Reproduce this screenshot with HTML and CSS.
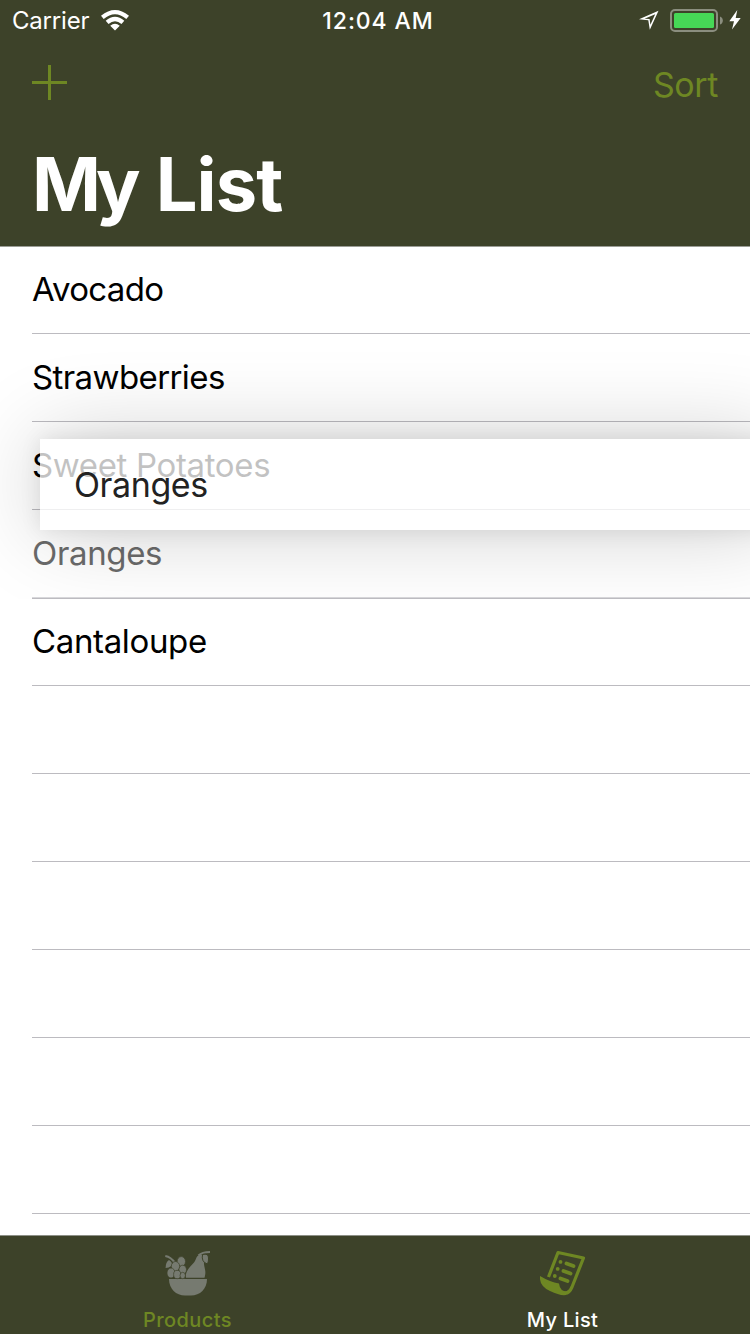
FILE: index.html
```html
<!DOCTYPE html>
<html lang="en">
<head>
<meta charset="utf-8">
<title>My List</title>
<link rel="stylesheet" href="styles.css">
</head>
<body>
<div class="screen">
  <header class="header">
    <div class="status">
      <div class="status-left">
        <span class="carrier">Carrier</span>
        <svg class="wifi" width="28" height="21" viewBox="0 0 28 21"><path fill="#fff" d="M0 5.800Q14-5.800 28 5.800L25.300 9.100Q14-.6 2.700 9.100ZM4.700 10.700Q14 3 23.300 10.700L20.500 13.900Q14 8.600 7.500 13.900ZM9.200 15.800Q14 11.800 18.800 15.800L14 20.500Z"/></svg>
      </div>
      <span class="clock">12:04 AM</span>
      <div class="status-right">
        <svg class="locate" width="20" height="20" viewBox="0 0 20 20"><path fill="#fff" fill-rule="evenodd" d="M19.500 .8L0 9.200L9.300 10.300L10.800 19.800ZM16.200 4.200L11.400 14.800L10.600 9L5.500 8.700Z"/></svg>
        <svg class="battery" width="53" height="23" viewBox="0 0 53 23"><rect x="1" y="1" width="46" height="21" rx="4" fill="none" stroke="#8b8e7f" stroke-width="2"/><rect x="4" y="4" width="40" height="15" rx="1.500" fill="#46d856"/><path d="M50 7.500Q52.800 8.500 52.800 11.500T50 15.500Z" fill="#8b8e7f"/></svg>
        <svg class="bolt" width="12" height="20" viewBox="0 0 12 20"><path fill="#fff" d="M8.300 0L.3 11.300H5L3 19.500L11.700 8H6.700Z"/></svg>
      </div>
    </div>
    <nav class="actions">
      <svg class="plus" width="35" height="35" viewBox="0 0 35 35"><path stroke="#6e8723" stroke-width="3" d="M0 17.500H35M17.500 0V35"/></svg>
      <span class="sort">Sort</span>
    </nav>
    <h1 class="title"><span class="title-m">M</span><span class="title-y">y</span> List</h1>
  </header>
  <main class="list">
    <div class="row"><span class="avocado">Avocado</span></div>
    <div class="row"><span class="strawberries">Strawberries</span></div>
    <div class="row"><span class="potatoes">Sweet Potatoes</span></div>
    <div class="row row-source"><span class="oranges">Oranges</span></div>
    <div class="row"><span class="cantaloupe">Cantaloupe</span></div>
    <div class="row"></div>
    <div class="row"></div>
    <div class="row"></div>
    <div class="row"></div>
    <div class="row"></div>
    <div class="row"></div>
    <div class="drag-layer"><div class="dragged"><span>Oranges</span></div></div>
  </main>
  <footer class="tabs">
    <div class="tab">
      <svg width="46" height="46" viewBox="0 0 46 46" fill="#767a70"><path d="M4 29H42C42 39 35 45.500 26 45.500H20C11 45.500 4 39 4 29Z"/><path d="M21 27.700C20 20 26 16.500 29 12.500C31.500 9 31 5.500 35.500 4.500C40 4.500 38.500 10 39 14C39.500 19 41.500 21 39.500 27.700Z"/><path d="M33.500 5.500Q37 2 45 2" fill="none" stroke="#767a70" stroke-width="2.200"/><path d="M37.500 4.500Q43.500 3 43.500 8Q43.800 11 42.500 14Q36 12 37.500 4.500Z" stroke="#3d4229" stroke-width="1"/><path d="M.3 6Q6 7 10 13" fill="none" stroke="#767a70" stroke-width="2.200"/><path d="M4 10Q8.500 13 6.300 16Q4 18 .6 18Q.6 12 4 10Z"/><g stroke="#3d4229" stroke-width=".7"><ellipse cx="16.300" cy="11.500" rx="4.200" ry="4.900"/><ellipse cx="10.500" cy="16.500" rx="4.200" ry="5"/><ellipse cx="17.700" cy="19.700" rx="3.800" ry="4.500"/><ellipse cx="6" cy="23" rx="4" ry="5"/><ellipse cx="12.200" cy="24.500" rx="3.600" ry="4.200"/><ellipse cx="17.700" cy="25.500" rx="2.700" ry="3.200"/></g></svg>
      <span class="tab-label">Products</span>
    </div>
    <div class="tab tab-active">
      <svg width="46" height="46" viewBox="0 0 46 46"><path fill="none" stroke="#6e8723" stroke-width="3.200" stroke-linejoin="round" d="M8.500 27L18 2.500L43.500 8L32 37Q29 44 24 43"/><path fill="#6e8723" d="M0 26Q10 32 19 33.500Q20 42 28 41.500L26 45Q20 46 10 41Q-1 36 0 26Z"/><g stroke="#6e8723" stroke-width="3.800" stroke-linecap="round"><path d="M26.500 13.500L33.500 16M23.500 21L30.500 23.500M20.500 28.500L27.500 31M20.500 11.800V11.900M17.700 18.800V18.900M14.800 26V26.100"/></g></svg>
      <span class="tab-label">My List</span>
    </div>
  </footer>
</div>
</body>
</html>
```
FILE: styles.css
```css
* { box-sizing: border-box; }
body { margin: 0; font-family: Inter, "Liberation Sans", sans-serif; background: #fff; }
svg { display: block; flex: none; }
.screen { width: 750px; height: 1334px; display: flex; flex-direction: column; overflow: hidden; }
.header { height: 246px; flex: none; background: #3d4229; color: #fff; }
.status { height: 40px; display: grid; grid-template-columns: 1fr auto 1fr; padding: 0 9px 0 12px; align-items: center; }
.status-left, .status-right { display: flex; align-items: center; }
.status-left { gap: 12px; }
.status-right { justify-content: flex-end; }
.carrier { font-size: 24px; letter-spacing: -.2px; padding-top: 1px; }
.clock { font-size: 23px; font-weight: 500; letter-spacing: .9px; padding: 2px 0 0 3px; }
.locate { margin-right: 11px; }
.battery { margin-right: 6px; }
.actions { height: 84px; display: flex; justify-content: space-between; align-items: center; padding: 0 32px; }
.sort { color: #6e8723; font-size: 34px; letter-spacing: -.4px; padding-top: 4px; }
.title { margin: 0; padding: 4px 0 0 32px; font-size: 74px; line-height: 112px; font-weight: 700; letter-spacing: -.9px; }
.title-m { letter-spacing: -5px; }
.title-y { letter-spacing: -1.5px; }
.list { flex: 1; position: relative; overflow: hidden; }
.list::before { content: ""; position: absolute; top: 0; left: 0; right: 0; height: 1px; background: #9b9d96; }
.row { height: 88px; margin-left: 32px; padding-bottom: 2px; border-bottom: 1px solid #bcbbc0; display: flex; align-items: center; font-size: 33px; color: #000; }
.row-source { color: #6b6b6b; border-bottom-color: #d9d9dc; }
.avocado { letter-spacing: -.65px; }
.strawberries { letter-spacing: -.6px; }
.potatoes { letter-spacing: -.36px; }
.oranges { letter-spacing: -.35px; }
.cantaloupe { letter-spacing: -.35px; }
.drag-layer { position: absolute; left: 0; top: 88px; width: 750px; height: 265px; overflow: hidden; }
.drag-layer::after { content: ""; position: absolute; left: 32px; right: 0; bottom: 0; height: 1px; background: #bcbbc0; }
.dragged { position: absolute; left: 40px; top: 105px; width: 738px; height: 91px; padding: 0 0 1px 34px; display: flex; align-items: center; background: rgba(255,255,255,.76); color: #222; font-size: 34px; letter-spacing: -.4px; box-shadow: 0 0 90px rgba(0,0,0,.2), 0 0 20px rgba(0,0,0,.09); }
.tabs { height: 99px; flex: none; display: grid; grid-template-columns: 1fr 1fr; background: #3d4229; border-top: 1px solid #8d9087; }
.tab { display: flex; flex-direction: column; align-items: center; padding-top: 14px; color: #6e8723; }
.tab-label { font-size: 20px; font-weight: 500; line-height: 24px; margin-top: 12px; letter-spacing: .4px; }
.tab-active .tab-label { color: #fff; letter-spacing: .3px; }
```
